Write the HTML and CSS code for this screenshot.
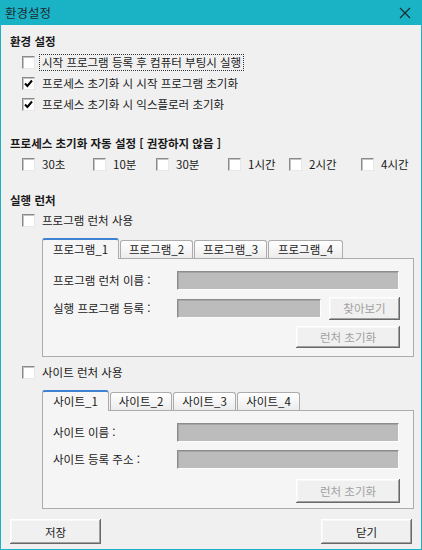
FILE: index.html
```html
<!DOCTYPE html>
<html lang="ko">
<head>
  <meta charset="UTF-8" />
  <title>환경설정</title>
  <link rel="stylesheet" href="styles.css">
</head>
<body>
  <div class="window">
    <div class="titlebar">
      <span class="title">환경설정</span>
      <svg class="close" width="12" height="12" viewBox="0 0 12 12"><path d="M1 1 L11 11 M11 1 L1 11" stroke="#1d2b30" stroke-width="1.2" fill="none"/></svg>
    </div>

    <div class="content">
      <h2 class="heading first">환경 설정</h2>
      <label class="check-row"><span class="box"></span><span class="text focus">시작 프로그램 등록 후 컴퓨터 부팅시 실행</span></label>
      <label class="check-row"><span class="box checked"><svg width="9" height="9" viewBox="0 0 9 9"><path d="M1 4.5 L3.4 7 L8 1.5" stroke="#000" stroke-width="2" fill="none"/></svg></span><span class="text">프로세스 초기화 시 시작 프로그램 초기화</span></label>
      <label class="check-row"><span class="box checked"><svg width="9" height="9" viewBox="0 0 9 9"><path d="M1 4.5 L3.4 7 L8 1.5" stroke="#000" stroke-width="2" fill="none"/></svg></span><span class="text">프로세스 초기화 시 익스플로러 초기화</span></label>

      <h2 class="heading second">프로세스 초기화 자동 설정 [ 권장하지 않음 ]</h2>
      <div class="interval-row">
        <label class="check-row"><span class="box"></span><span class="text">30초</span></label>
        <label class="check-row"><span class="box"></span><span class="text">10분</span></label>
        <label class="check-row"><span class="box"></span><span class="text">30분</span></label>
        <label class="check-row"><span class="box"></span><span class="text">1시간</span></label>
        <label class="check-row"><span class="box"></span><span class="text">2시간</span></label>
        <label class="check-row"><span class="box"></span><span class="text">4시간</span></label>
      </div>

      <h2 class="heading third">실행 런처</h2>
      <label class="check-row"><span class="box"></span><span class="text">프로그램 런처 사용</span></label>

      <div class="tabs">
        <div class="tab-strip">
          <div class="tab active w-p1">프로그램_1</div>
          <div class="tab w-p2">프로그램_2</div>
          <div class="tab w-p3">프로그램_3</div>
          <div class="tab w-p4">프로그램_4</div>
        </div>
        <div class="tab-panel">
          <div class="field-row">
            <span class="field-label">프로그램 런처 이름 :</span>
            <div class="input"></div>
          </div>
          <div class="field-row tall">
            <span class="field-label">실행 프로그램 등록 :</span>
            <div class="input short"></div>
            <button class="btn disabled browse" type="button">찾아보기</button>
          </div>
          <div class="button-row">
            <button class="btn disabled reset" type="button">런처 초기화</button>
          </div>
        </div>
      </div>

      <label class="check-row site"><span class="box"></span><span class="text">사이트 런처 사용</span></label>

      <div class="tabs">
        <div class="tab-strip">
          <div class="tab active w-s1">사이트_1</div>
          <div class="tab w-s2">사이트_2</div>
          <div class="tab w-s3">사이트_3</div>
          <div class="tab w-s4">사이트_4</div>
        </div>
        <div class="tab-panel">
          <div class="field-row">
            <span class="field-label">사이트 이름 :</span>
            <div class="input"></div>
          </div>
          <div class="field-row">
            <span class="field-label">사이트 등록 주소 :</span>
            <div class="input"></div>
          </div>
          <div class="button-row site-reset">
            <button class="btn disabled reset tall-btn" type="button">런처 초기화</button>
          </div>
        </div>
      </div>

      <div class="footer">
        <button class="btn main" type="button">저장</button>
        <button class="btn main" type="button">닫기</button>
      </div>
    </div>
  </div>
</body>
</html>
```

FILE: styles.css
```css
* {
  box-sizing: border-box;
}
body {
  margin: 0;
  background: #f0f0f0;
  font-family: "Noto Sans CJK KR", "Noto Sans", sans-serif;
  font-size: 11.5px;
  color: #1a1a1a;
}
.window {
  width: 422px;
  height: 550px;
  border: 1px solid #1ab3c6;
  border-top: none;
  background: #f0f0f0;
  display: flex;
  flex-direction: column;
}
.titlebar {
  height: 25px;
  margin: 0 -1px;
  background: #1ab3c6;
  display: flex;
  align-items: center;
  justify-content: space-between;
  padding: 0 11px 0 5px;
}
.title {
  font-size: 12.5px;
  color: #1d2b30;
  line-height: 16px;
}
.content {
  flex: 1;
  display: flex;
  flex-direction: column;
  padding: 0 9px 0 8px;
}
.heading {
  margin: 0;
  font-size: 11.5px;
  font-weight: 700;
  line-height: 16px;
  height: 16px;
  padding-left: 1px;
}
.heading.first {
  margin-top: 8px;
  margin-bottom: 3px;
}
.heading.second {
  margin-top: 20px;
  margin-bottom: 3px;
}
.heading.third {
  margin-top: 17px;
  margin-bottom: 2px;
}
.check-row {
  display: flex;
  align-items: center;
  height: 21px;
  padding-left: 13px;
  white-space: nowrap;
}
.box {
  width: 13px;
  height: 13px;
  flex: none;
  background: #fff;
  border: 1px solid;
  border-color: #8a8a8a #e8e8e8 #e8e8e8 #8a8a8a;
  box-shadow: inset 1px 1px 0 #c4c4c4;
  display: flex;
  align-items: center;
  justify-content: center;
}
.text {
  margin-left: 4px;
  padding: 0 2px;
  line-height: 15px;
  border: 1px solid transparent;
}
.text.focus {
  border: 1px dotted #333;
}
.interval-row {
  display: grid;
  grid-template-columns: 71px 63px 72px 61px 72px auto;
}
.tabs {
  margin-left: 33px;
  width: 372px;
  margin-top: 7px;
  display: flex;
  flex-direction: column;
}
.tab-strip {
  display: flex;
  align-items: flex-end;
  height: 20px;
  gap: 1px;
  position: relative;
  z-index: 1;
}
.tab {
  height: 18px;
  border: 1px solid #acacac;
  border-bottom: none;
  border-radius: 3px 3px 0 0;
  background: linear-gradient(#ffffff, #ececec);
  text-align: center;
  line-height: 16px;
}
.tab.active {
  height: 21px;
  margin-bottom: -1px;
  border-top: 2px solid #3f82d1;
  background: #f5f5f5;
  line-height: 18px;
}
.w-p1 { width: 77px; }
.w-p2 { width: 73px; }
.w-p3 { width: 73px; }
.w-p4 { width: 75px; }
.w-s1 { width: 67px; }
.w-s2 { width: 62px; }
.w-s3 { width: 63px; }
.w-s4 { width: 63px; }
.tab-panel {
  height: 99px;
  border: 1px solid #acacac;
  background: #f5f5f5;
  padding: 11px 14px 0 10px;
  display: flex;
  flex-direction: column;
}
.field-row {
  display: flex;
  align-items: center;
  height: 20px;
  margin-bottom: 7px;
}
.field-row.tall {
  height: 22px;
}
.field-label {
  width: 124px;
  flex: none;
  line-height: 16px;
}
.input {
  flex: 1;
  height: 19px;
  background: #bcbcbc;
  border: 1px solid;
  border-color: #8c8c8c #fdfdfd #fdfdfd #8c8c8c;
  box-shadow: inset 1px 1px 0 #a4a4a4;
}
.input.short {
  flex: none;
  width: 144px;
}
.btn {
  font-family: inherit;
  font-size: 11.5px;
  background: #f0f0f0;
  border: none;
  padding: 0;
  box-shadow: inset -1px -1px 0 #696969, inset 1px 1px 0 #ffffff, inset -2px -2px 0 #a0a0a0, inset 2px 2px 0 #f8f8f8;
  color: #1a1a1a;
}
.btn.disabled {
  color: #a0a0a0;
}
.btn.browse {
  width: 72px;
  height: 23px;
  margin-left: 8px;
  margin-right: -1px;
}
.button-row {
  display: flex;
  justify-content: flex-end;
  margin-right: -1px;
}
.btn.reset {
  width: 104px;
  height: 22px;
}
.site-reset {
  margin-top: 3px;
}
.btn.tall-btn {
  height: 24px;
}
.check-row.site {
  margin-top: 5px;
}
.footer {
  margin-top: 10px;
  margin-left: 1px;
  display: flex;
  justify-content: space-between;
}
.btn.main {
  width: 91px;
  height: 25px;
}
```
